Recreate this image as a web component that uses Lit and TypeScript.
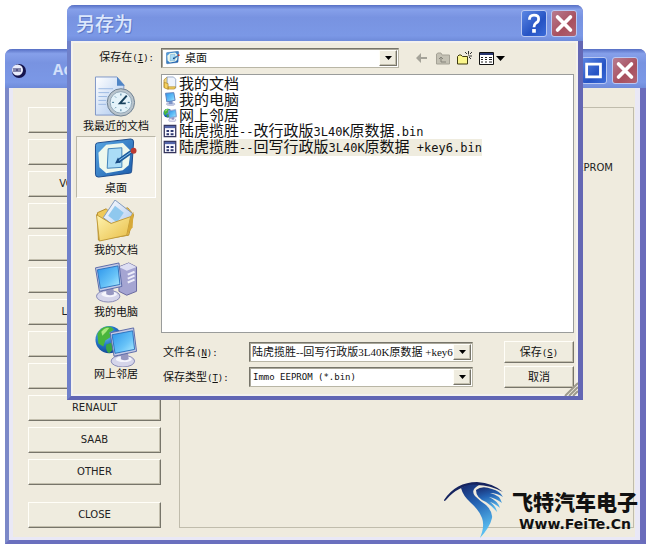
import { LitElement, html, css, svg, nothing } from "lit";
import { customElement } from "lit/decorators.js";
import { classMap } from "lit/directives/class-map.js";

const globe = svg`
  <circle cx="15" cy="16" r="14" fill="url(#globe)"/>
  <path d="M3 10 Q8 1 17 3 L20 6 L15 9 L17 13 L11 17 L9 23 L4 20 Z" fill="#49b53c"/>
  <path d="M7 8 Q11 3 15 4 L12 8 L8 12 Z" fill="#a9e77e"/>
  <path d="M12 21 L18 19 L21 24 L15 30 Q11 28 12 21 Z" fill="#3aa548"/>`;

const screen = svg`
  <ellipse cx="14" cy="35" rx="12" ry="6" fill="#d5d5ea" stroke="#8789b5"/>
  <ellipse cx="15" cy="33" rx="8" ry="3" fill="#f5f5fc"/>
  <path d="M12 26 L19 25 L20 33 Q16 35 12 33 Z" fill="#9697c0"/>
  <path d="M1 6 L25 1 L28 25 L5 30 Z" fill="#c4cae6" stroke="#5c6ba8"/>
  <path d="M3 8 L24 4 L26 23 L6 27 Z" fill="url(#lcd)" stroke="#2f74bd"/>`;

const defs = svg`
  <defs>
    <linearGradient id="lcd" x1="0" y1="0" x2="1" y2="1">
      <stop offset="0" stop-color="#2a93ea"/><stop offset="0.6" stop-color="#68c3f8"/><stop offset="1" stop-color="#b4ecff"/>
    </linearGradient>
    <radialGradient id="globe" cx="0.35" cy="0.3" r="0.8">
      <stop offset="0" stop-color="#7fd0f5"/><stop offset="0.5" stop-color="#2374c8"/><stop offset="1" stop-color="#0d3c86"/>
    </radialGradient>
    <linearGradient id="paper" x1="0" y1="0" x2="1" y2="1">
      <stop offset="0" stop-color="#ffffff"/><stop offset="1" stop-color="#a9c6ee"/>
    </linearGradient>
    <linearGradient id="folder" x1="0" y1="0" x2="1" y2="1">
      <stop offset="0" stop-color="#fff4b0"/><stop offset="1" stop-color="#e8bd45"/>
    </linearGradient>
    <linearGradient id="pad" x1="0" y1="0" x2="1" y2="1">
      <stop offset="0" stop-color="#5aa8e4"/><stop offset="1" stop-color="#1b5cab"/>
    </linearGradient>
  </defs>`;

const art: Record<string, unknown> = {
  recent: svg`
    <path d="M1 1 H23 L30 9 V40 H1 Z" fill="url(#paper)" stroke="#7f97c7"/>
    <path d="M23 1 L31 10 H23 Z" fill="#4f85c6"/>
    <path d="M4 13 H19 M4 17 H15 M4 21 H13 M4 25 H12 M4 29 H12" stroke="#9db9e2"/>
    <circle cx="27" cy="27" r="14" fill="#b9c4cc" stroke="#6d7f90"/>
    <circle cx="27" cy="27" r="11" fill="#e4f3fa" stroke="#8fa5b5"/>
    <path d="M27 18 V20 M27 34 V36 M18 27 H20 M34 27 H36 M21 21 L22 22 M32 32 L33 33 M21 33 L22 32" stroke="#3e7797"/>
    <path d="M33 20 L26 28 H32" fill="none" stroke="#17415c" stroke-width="2"/>`,
  desktop: svg`
    <path d="M3 5 L37 1 Q40 1 40 4 L38 34 Q38 36 36 36 L4 40 Q1 40 1 37 L1 8 Q1 5 3 5 Z" fill="url(#pad)" stroke="#1c4c8d"/>
    <path d="M12 7 L29 5 L37 13 L35 28 L29 33 L12 36 L5 30 L4 15 Z" fill="#edf8ee"/>
    <path d="M14 11 L28 10 L28 30 L13 31 Z" fill="#aadcf6" stroke="#3f82b9"/>
    <path d="M24 24 L38 14" stroke="#1d5c9c" stroke-width="4"/>
    <path d="M21 26 L24 20 L27 25 Z" fill="#174a82"/>
    <path d="M25 23 L38 14" stroke="#8ec9f0"/>
    <circle cx="40" cy="13" r="3" fill="#bb3a31"/>`,
  documents: svg`
    <path d="M3 13 L12 9 L16 13 L34 8 L40 15 L35 36 L4 41 Z" fill="#efc95a" stroke="#b48c2c"/>
    <path d="M21 0 L39 14 L27 32 L9 18 Z" fill="url(#paper)" stroke="#8099bd"/>
    <path d="M21 6 L30 13 L23 23 L14 16 Z" fill="#8fc8ee"/>
    <path d="M2 15 L17 24 L37 17 L33 36 L5 42 Z" fill="url(#folder)" stroke="#c19b3a"/>
    <path d="M37 17 L40 12 L39 28 L33 36 Z" fill="#d7a938"/>`,
  computer: svg`
    <path d="M25 5 L35 1 L43 5 L43 30 L33 34 L25 30 Z" fill="#a5a5d2" stroke="#68689f"/>
    <path d="M25 5 L35 1 L43 5 L33 9 Z" fill="#dedff3"/>
    <path d="M34 13 L41 10 M34 17 L41 14 M34 21 L41 18" stroke="#ededfa" stroke-width="2"/>
    ${screen}`,
  network: svg`${globe}<g transform="translate(15 3)">${screen}</g>`,
  file: svg`
    <path d="M4 4 H40 V40 H4 Z" fill="#f8f8ff" stroke="#34345c" stroke-width="4"/>
    <path d="M6 6 H38 V13 H6 Z" fill="#5365aa"/>
    <path d="M11 19 H19 V25 H11 Z M24 19 H33 V25 H24 Z M11 29 H19 V35 H11 Z M24 29 H33 V35 H24 Z" fill="#2f3a72"/>`,
  monitor: svg`
    <ellipse cx="24" cy="38" rx="14" ry="5" fill="#c3cbe6" stroke="#8789b5"/>
    <path d="M18 28 H30 V38 H18 Z" fill="#7f95c8"/>
    <path d="M8 4 L34 2 L38 26 L12 31 Z" fill="url(#lcd)" stroke="#5c7fbb" stroke-width="3"/>`,
  folderDocs: svg`
    <path d="M3 12 L12 4 L18 8 V40 L3 36 Z" fill="#f3d67d" stroke="#a77e23" stroke-width="2"/>
    <path d="M13 3 H33 L40 10 V38 H13 Z" fill="#eef3fc" stroke="#6883ad" stroke-width="2"/>
    <path d="M4 20 L16 24 V42 L4 37 Z M16 34 H40 L36 41 H16 Z" fill="#f5d15f" stroke="#a77e23" stroke-width="2"/>`,
};

const glyph = (name: string, cls: string) => html`
  <svg class=${cls} viewBox="0 0 44 44" aria-hidden="true">${defs}${art[name]}</svg>`;

const cross = html`
  <svg class="mark" viewBox="0 0 26 26" aria-hidden="true">
    <path d="M6 6 L20 20 M20 6 L6 20" stroke="#fff" stroke-width="4" stroke-linecap="round"/>
  </svg>`;

const arrow = html`
  <svg class="arrow" viewBox="0 0 7 4" aria-hidden="true"><path d="M0 0 H7 L3.500 4 Z"/></svg>`;

const mono = (t: string) => html`<span class="mono">${t}</span>`;
const key = (k: string, tail = "") => html`<span class="mono">(<u>${k}</u>)${tail}</span>`;

const makes = ["", "", "VOLKSWAGEN", "", "", "", "LAND ROVER", "", "", "RENAULT", "SAAB", "OTHER"];

const places = [
  { icon: "recent", label: "我最近的文档" },
  { icon: "desktop", label: "桌面", current: true },
  { icon: "documents", label: "我的文档" },
  { icon: "computer", label: "我的电脑" },
  { icon: "network", label: "网上邻居" },
];

const files = [
  { icon: "folderDocs", name: html`我的文档` },
  { icon: "monitor", name: html`我的电脑` },
  { icon: "network", name: html`网上邻居` },
  { icon: "file", name: html`陆虎揽胜${mono("--")}改行政版${mono("3L40K")}原数据${mono(".bin")}` },
  { icon: "file", name: html`陆虎揽胜${mono("--")}回写行政版${mono("3L40K")}原数据${mono(" +key6.bin")}`, current: true },
];

const shared = css`
  * { box-sizing: border-box; }
  button, input, select { font: inherit; color: inherit; margin: 0; padding: 0; border-radius: 0; }
  svg { display: block; flex: none; }
  .raised {
    background: #efecdf;
    border: 1px solid;
    border-color: #fffef8 #77756a #77756a #fffef8;
    box-shadow: inset -1px -1px #c3bfae;
  }
  .cap {
    flex: none;
    width: 26px;
    height: 27px;
    border: 1px solid #b9c8f3;
    border-radius: 3px;
    background: linear-gradient(135deg, #5c87e4, #2653c4 60%, #3a6bd8);
  }
  .cap.close { background: linear-gradient(135deg, #b87c90, #a8505e 60%, #b06474); }
  .mark { width: 100%; height: 100%; fill: none; }
`;

@customElement("save-dialog")
class SaveDialog extends LitElement {
  static styles = [shared, css`
    :host {
      display: block;
      font: 11px/14px "Liberation Sans", "Noto Sans CJK SC", sans-serif;
      color: #111;
      border: solid;
      border-width: 0 5px 4px 4px;
      border-color: #6166b4 #6467b4 #6166b4 #6f80ca;
      border-radius: 7px 7px 0 0;
      background: #efebde;
    }
    .mono { font-family: "DejaVu Sans Mono", monospace; font-size: 9px; white-space: pre; }
    .title {
      display: flex;
      align-items: center;
      gap: 4px;
      height: 36px;
      margin: 0 -5px 0 -4px;
      padding: 0 6px 0 9px;
      border-radius: 7px 7px 0 0;
      background: linear-gradient(#566fc4, #86a0ea 12%, #7893e1 35%, #7b98e6 85%, #6f8bda);
    }
    h1 {
      flex: 1;
      margin: 0;
      color: #dce7fc;
      font: 500 19px/24px "Noto Sans CJK SC", sans-serif;
      text-shadow: 1px 1px #5f79c6;
    }
    .body {
      position: relative;
      display: grid;
      grid-template-columns: 80px minmax(0, 1fr);
      gap: 6px 5px;
      padding: 7px 4px 8px 5px;
      box-shadow: inset 0 0 0 2px #f3f1ee;
    }
    .look { justify-self: end; line-height: 18px; padding-right: 2px; }
    .tools { display: flex; align-items: center; gap: 7px; }
    .combo {
      display: flex;
      align-items: stretch;
      height: 20px;
      padding: 1px;
      background: #fff;
      border: 1px solid;
      border-color: #77756a #b9b6a6 #b9b6a6 #77756a;
      box-shadow: inset 1px 1px #aaa79a;
    }
    .combo select, .combo input {
      flex: 1;
      min-width: 0;
      border: 0;
      outline: 0;
      padding: 0 2px;
      background: transparent;
      appearance: none;
    }
    .combo input { font-family: "Liberation Serif", "Noto Sans CJK SC", serif; padding: 0 0 0 1px; }
    .combo .type { font-family: "DejaVu Sans Mono", monospace; font-size: 9px; }
    .combo.where { flex: 0 1 238px; margin-right: 9px; padding-left: 4px; gap: 3px; }
    .small { width: 14px; height: 14px; align-self: center; }
    .drop { display: grid; place-items: center; width: 18px; flex: none; }
    .arrow { width: 7px; height: 4px; }
    .tool { display: flex; align-items: center; gap: 2px; height: 18px; border: 0; background: none; }
    .places { display: flex; flex-direction: column; }
    .place {
      display: flex;
      flex-direction: column;
      align-items: center;
      height: 62px;
      padding: 1px 0;
      border: 1px solid transparent;
      background: none;
      white-space: nowrap;
    }
    .place.current { background: #f5f2e9; border-color: #bab7a8 #fff #fff #bab7a8; }
    .large { width: 44px; height: 43px; }
    .main { display: flex; flex-direction: column; gap: 8px; }
    .files {
      flex: 1;
      min-height: 259px;
      margin: 0;
      padding: 0 1px;
      list-style: none;
      background: #fff;
      border: 1px solid #9a9c9b;
      font-size: 15px;
      line-height: 15px;
    }
    .files li { display: flex; align-items: center; gap: 2px; height: 16px; white-space: nowrap; }
    .files .mono { font-size: 12px; }
    .files .current { background: #efecdf; }
    .form {
      display: grid;
      grid-template-columns: 86px minmax(0, 1fr) 70px;
      align-items: center;
      row-gap: 3px;
      padding-left: 2px;
    }
    .form .combo { margin-right: 31px; }
    .form .action { height: 22px; }
    .grip { position: absolute; right: 0; bottom: 0; width: 14px; height: 14px; }
  `];

  render() {
    return html`
      <header class="title">
        <h1>另存为</h1>
        <button class="cap" aria-label="帮助">
          <svg class="mark" viewBox="0 0 26 26" aria-hidden="true">
            <path d="M8 9 Q8 4 13 4 Q18 4 18 8 Q18 11 15 12.500 Q13 14 13 17" stroke="#fff" stroke-width="3"/>
            <path d="M11 19 H15 V23 H11 Z" fill="#fff"/>
          </svg>
        </button>
        <button class="cap close" aria-label="关闭">${cross}</button>
      </header>
      <div class="body">
        <label class="look" for="where">保存在${key("I", ":")}</label>
        <div class="tools">
          <div class="combo where">
            ${glyph("desktop", "small")}
            <select id="where"><option>桌面</option></select>
            <span class="drop raised">${arrow}</span>
          </div>
          <button class="tool" aria-label="后退">
            <svg width="14" height="12" viewBox="0 0 14 12"><path d="M1 6 L6 1 V5 H12 V7 H6 V11 Z" fill="#a5a399"/></svg>
          </button>
          <button class="tool" aria-label="向上">
            <svg width="14" height="13" viewBox="0 0 14 13">
              <path d="M0.500 12 V2 L2 1 H5 L6 3 H13.500 V12 Z" fill="#c4c1b4" stroke="#a5a296"/>
              <path d="M3 7 L5 5 L7 7 M5 5 V10 H10" fill="none" stroke="#85837a"/>
            </svg>
          </button>
          <button class="tool" aria-label="新建文件夹">
            <svg width="15" height="14" viewBox="0 0 15 14">
              <path d="M0.500 13 V5.500 L2 4 H4 L5.500 5.500 H10.500 V13 Z" fill="#fbf68c" stroke="#3f3b10"/>
              <path d="M8 1 L10 3 M11.500 0 V3 M15 1 L13 3 M12 5 H15 M12 6 L14 8 M11 4 H12" stroke="#333"/>
            </svg>
          </button>
          <button class="tool" aria-label="查看">
            <svg width="15" height="13" viewBox="0 0 15 13">
              <path d="M0.500 0.500 H14.500 V12.500 H0.500 Z" fill="#fff" stroke="#111"/>
              <path d="M1 1 H14 V3 H1 Z" fill="#28366f"/>
              <path d="M2 5.500 H4 M6 5.500 H8 M10 5.500 H13 M2 7.500 H4 M6 7.500 H8 M10 7.500 H13 M2 10 H4 M6 10 H8 M10 10 H13" stroke="#222"/>
            </svg>
            <svg width="9" height="5" viewBox="0 0 9 5"><path d="M0 0 H9 L4.500 5 Z"/></svg>
          </button>
        </div>
        <nav class="places">
          ${places.map((p) => html`
            <button class=${classMap({ place: true, current: !!p.current })}>
              ${glyph(p.icon, "large")}<span>${p.label}</span>
            </button>`)}
        </nav>
        <div class="main">
          <ul class="files">
            ${files.map((f) => html`
              <li>${glyph(f.icon, "small")}<span class=${f.current ? "current" : nothing}>${f.name}</span></li>`)}
          </ul>
          <div class="form">
            <label for="name">文件名${key("N", ":")}</label>
            <div class="combo">
              <input id="name" type="text" value="陆虎揽胜--回写行政版3L40K原数据 +key6.bin">
              <button class="drop raised" aria-label="展开">${arrow}</button>
            </div>
            <button class="action raised">保存${key("S")}</button>
            <label for="type">保存类型${key("T", ":")}</label>
            <div class="combo">
              <select id="type" class="type"><option>Immo EEPROM (*.bin)</option></select>
              <span class="drop raised">${arrow}</span>
            </div>
            <button class="action raised">取消</button>
          </div>
        </div>
        <svg class="grip" viewBox="0 0 14 14" aria-hidden="true">
          <path d="M1 14 L14 1 M5 14 L14 5 M9 14 L14 9" stroke="#9d9a8c" stroke-width="2"/>
        </svg>
      </div>`;
  }
}

@customElement("app-root")
class AppRoot extends LitElement {
  static styles = [shared, css`
    :host {
      display: block;
      position: relative;
      padding: 49px 2px 1px 5px;
      background: #fff;
      font: 10px/14px "DejaVu Sans", sans-serif;
      color: #222;
    }
    .window {
      border: solid;
      border-width: 0 6px 4px 4px;
      border-color: #6a6cbb #6a6cbb #6a6fbe #7b88c8;
      border-radius: 7px 7px 0 0;
      background: #efebde;
    }
    .title {
      display: flex;
      align-items: center;
      gap: 5px;
      height: 39px;
      margin: 0 -6px 0 -4px;
      padding: 4px 8px 0 6px;
      border-radius: 7px 7px 0 0;
      background: linear-gradient(#566fc4, #86a0ea 12%, #7893e1 35%, #7b98e6 85%, #6f8bda);
    }
    h2 {
      flex: 1;
      margin: 0 0 0 22px;
      color: #d3e0fa;
      font: bold 17px/22px "Liberation Mono", monospace;
    }
    .client {
      display: grid;
      grid-template-columns: 133px minmax(0, 1fr);
      column-gap: 18px;
      padding: 19px 6px 12px 19px;
      box-shadow: inset 4px -3px #e9e8f6, inset -5px 0 #e9e8f6;
    }
    .makes { display: flex; flex-direction: column; gap: 6px; }
    .make { height: 26px; }
    .make.last { margin-top: 11px; }
    .panel {
      display: flex;
      justify-content: flex-end;
      padding: 53px 20px 0 0;
      border: 1px solid #c0bcac;
    }
    save-dialog { position: absolute; left: 67px; right: 65px; top: 5px; }
    .brand {
      position: absolute;
      right: 10px;
      bottom: 6px;
      display: flex;
      align-items: flex-end;
      color: #111;
      text-decoration: none;
    }
    .words { display: flex; flex-direction: column; align-items: center; padding-bottom: 5px; margin-left: -16px; }
    .cn { font: 900 21px/22px "Liberation Sans", "Noto Sans CJK SC", sans-serif; }
    .url { font: bold 14px/20px "DejaVu Sans", sans-serif; }
  `];

  render() {
    return html`
      <main class="window">
        <header class="title">
          <svg width="15" height="15" viewBox="0 0 15 15" aria-hidden="true">
            <circle cx="8" cy="8" r="7" fill="#15154e"/>
            <circle cx="6.500" cy="7" r="5.500" fill="#e9ecfb"/>
            <path d="M3 5 V9 M5 5 V9 M7 5 V9 M9 5 V9 M5 7 H7" stroke="#23235e"/>
          </svg>
          <h2>Ac</h2>
          <button class="cap" aria-label="Maximize">
            <svg class="mark" viewBox="0 0 26 26" aria-hidden="true">
              <path d="M5 6 H20 V20 H5 Z" stroke="#fff" stroke-width="3"/>
            </svg>
          </button>
          <button class="cap close" aria-label="Close">${cross}</button>
        </header>
        <div class="client">
          <div class="makes">
            ${makes.map((m, i) => html`<button class="make raised" aria-label=${m || `Make ${i + 1}`}>${m}</button>`)}
            <button class="make last raised">CLOSE</button>
          </div>
          <section class="panel">EEPROM</section>
        </div>
      </main>
      <save-dialog></save-dialog>
      <a class="brand" href="#">
        <svg width="84" height="58" viewBox="0 0 84 58" aria-hidden="true">
          <defs>
            <linearGradient id="wing" x1="0" y1="0" x2="0.300" y2="1">
              <stop offset="0" stop-color="#17286b"/><stop offset="0.450" stop-color="#2463b4"/><stop offset="1" stop-color="#59bdf0"/>
            </linearGradient>
          </defs>
          <path d="M0 19 Q12 1 33 1 Q49 2 59 11 Q46 4 33 4 Q14 4 2 19 Q0 21 0 19 Z" fill="#16245f"/>
          <path d="M17 7 Q24 2 35 4 Q26 9 31 15 Q36 20 42 24 Q49 31 48 37 Q46 46 36 57 Q41 45 38 37 Q35 29 27 22 Q19 15 17 7 Z" fill="url(#wing)"/>
          <path d="M32 9 Q38 4 48 8 Q56 10 59 16 Q53 12 46 12 Q56 14 58 22 Q51 17 45 16 Q54 20 56 27 Q50 22 46 21 Q52 25 53 31 Q48 25 42 21 Q32 17 32 9 Z" fill="url(#wing)"/>
        </svg>
        <span class="words"><span class="cn">飞特汽车电子</span><span class="url">Www.FeiTe.Cn</span></span>
      </a>`;
  }
}
